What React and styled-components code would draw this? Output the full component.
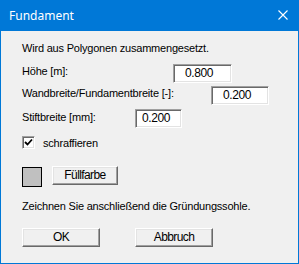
import React from "react";
import styled, { createGlobalStyle } from "styled-components";

const Global = createGlobalStyle`
  html, body { margin: 0; padding: 0; background: #f0f0f0; }
  * { box-sizing: border-box; }
`;

const Window = styled.div`
  width: 299px;
  height: 264px;
  border: 1px solid #0078d7;
  border-top: none;
  background: #f0f0f0;
  display: flex;
  flex-direction: column;
  font-family: "Liberation Sans", Arial, sans-serif;
  font-size: 11px;
  letter-spacing: -0.2px;
  color: #000;
`;

const TitleBar = styled.div`
  height: 31px;
  margin: 0 -1px;
  background: #0078d7;
  color: #fff;
  display: flex;
  align-items: center;
  justify-content: space-between;
  padding: 0 9px 1px 9px;
  font-family: "Segoe UI", "Noto Sans", "Open Sans", sans-serif;
  font-size: 12px;
  letter-spacing: 0;
`;

const CloseIcon = styled.svg`
  width: 10px;
  height: 10px;
  margin-right: 2px;
  display: block;
`;

const Content = styled.div`
  padding: 11px 0 0 21px;
  display: flex;
  flex-direction: column;
`;

const Text = styled.div`
  line-height: 13px;
  height: 13px;
  white-space: nowrap;
  margin-top: ${(p) => p.$mt || 0}px;
`;

const Row = styled.div`
  display: grid;
  grid-template-columns: ${(p) => p.$labelWidth}px auto;
  align-items: start;
  margin-top: ${(p) => p.$mt}px;
  height: 19px;
`;

const Label = styled.div`
  line-height: 13px;
  white-space: nowrap;
  margin-top: ${(p) => p.$mt}px;
`;

const Input = styled.div`
  width: ${(p) => p.$w}px;
  height: 19px;
  background: #fff;
  border-top: 1px solid #a0a0a0;
  border-left: 1px solid #a0a0a0;
  border-right: 1px solid #fff;
  border-bottom: 1px solid #fff;
  box-shadow: inset 1px 1px 0 #696969, inset -1px -1px 0 #e3e3e3;
  padding-left: ${(p) => p.$pad}px;
  font-size: 12px;
  letter-spacing: -0.4px;
  line-height: 17px;
  padding-top: 0;
`;

const CheckRow = styled.div`
  display: flex;
  align-items: center;
  gap: 8px;
  margin-top: 8px;
  height: 13px;
`;

const CheckBox = styled.div`
  width: 13px;
  height: 13px;
  background: #fff;
  border-top: 1px solid #a0a0a0;
  border-left: 1px solid #a0a0a0;
  border-right: 1px solid #fff;
  border-bottom: 1px solid #fff;
  box-shadow: inset 1px 1px 0 #696969, inset -1px -1px 0 #e3e3e3;
  display: flex;
  align-items: center;
  justify-content: center;
`;

const ColorRow = styled.div`
  display: flex;
  align-items: flex-start;
  gap: 10px;
  margin-top: 17px;
`;

const Swatch = styled.div`
  width: 20px;
  height: 20px;
  margin-top: 1px;
  background: #c0c0c0;
  border: 1px solid #000;
`;

const Button = styled.div`
  width: ${(p) => p.$w}px;
  height: 19px;
  background: #f0f0f0;
  border-top: 1px solid #fff;
  border-left: 1px solid #fff;
  border-right: 1px solid #696969;
  border-bottom: 1px solid #696969;
  box-shadow: inset -1px -1px 0 #a0a0a0, inset 1px 1px 0 #e3e3e3;
  display: flex;
  align-items: center;
  justify-content: center;
  line-height: 14px;
  padding-bottom: 1px;
  font-size: 12px;
  letter-spacing: -0.6px;
`;

const ButtonRow = styled.div`
  display: flex;
  gap: 35px;
  margin-top: 15px;
`;

export default function App() {
  return (
    <>
      <Global />
      <Window>
        <TitleBar>
          <span>Fundament</span>
          <CloseIcon viewBox="0 0 10 10">
            <path d="M0.5 0.5 L9.5 9.5 M9.5 0.5 L0.5 9.5" stroke="#fff" strokeWidth="1.1" fill="none" />
          </CloseIcon>
        </TitleBar>
        <Content>
          <Text>Wird aus Polygonen zusammengesetzt.</Text>
          <Row $labelWidth={151} $mt={9}>
            <Label $mt={1}>Höhe [m]:</Label>
            <Input $w={59} $pad={11}>0.800</Input>
          </Row>
          <Row $labelWidth={189} $mt={3}>
            <Label $mt={1}>Wandbreite/Fundamentbreite [-]:</Label>
            <Input $w={58} $pad={11}>0.200</Input>
          </Row>
          <Row $labelWidth={113} $mt={4}>
            <Label $mt={2}>Stiftbreite [mm]:</Label>
            <Input $w={47} $pad={6}>0.200</Input>
          </Row>
          <CheckRow>
            <CheckBox>
              <svg width="9" height="9" viewBox="0 0 9 9">
                <path d="M1 4 L3.5 6.5 L8 1.5" stroke="#000" strokeWidth="1.8" fill="none" />
              </svg>
            </CheckBox>
            <span>schraffieren</span>
          </CheckRow>
          <ColorRow>
            <Swatch />
            <Button $w={66}>Füllfarbe</Button>
          </ColorRow>
          <Text $mt={13}>Zeichnen Sie anschließend die Gründungssohle.</Text>
          <ButtonRow>
            <Button $w={78}>OK</Button>
            <Button $w={78}>Abbruch</Button>
          </ButtonRow>
        </Content>
      </Window>
    </>
  );
}
